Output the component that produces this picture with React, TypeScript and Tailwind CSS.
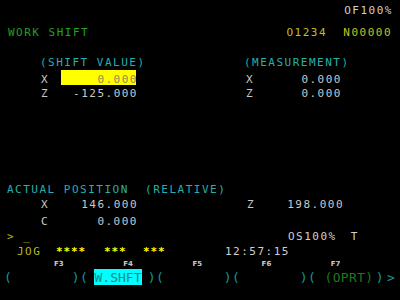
import React from "react";

function Btn({ children }: { children?: React.ReactNode }) {
  return (
    <div className="w-[76px] flex justify-between items-start">
      <span className="text-[#1a9494]">(</span>
      {children}
      <span className="text-[#1a9494]">)</span>
    </div>
  );
}

function Val({ w, children, cls = "" }: { w: string; children: React.ReactNode; cls?: string }) {
  return (
    <div className={`${w} flex justify-end ${cls}`}>
      <span className="-mr-[2px] whitespace-pre">{children}</span>
    </div>
  );
}

export default function App() {
  return (
    <div className="w-[400px] h-[300px] bg-black overflow-hidden font-['DejaVu_Sans_Mono',monospace] text-[11px] tracking-[1.5px] text-[#c8c8c8] flex flex-col">
      {/* status */}
      <div className="mt-[4px] h-[14px] leading-[14px] flex items-center justify-end pr-[7px]">
        <span className="text-[#d0d0d0]">OF100%</span>
      </div>
      {/* title */}
      <div className="mt-[8px] h-[14px] leading-[14px] flex items-center justify-between pl-[8px] pr-[8px]">
        <span className="text-[#22a022]">WORK SHIFT</span>
        <span className="text-[#c0c020] whitespace-pre">O1234  N00000</span>
      </div>
      {/* headings */}
      <div className="mt-[16px] h-[14px] leading-[14px] flex items-center pl-[40px] text-[#22b0b0]">
        <span className="w-[204px]">(SHIFT VALUE)</span>
        <span>(MEASUREMENT)</span>
      </div>
      {/* X row */}
      <div className="h-[15px] leading-[10px] flex items-end pl-[41px]">
        <span className="w-[20px]">X</span>
        <div className="w-[75px] h-[15px] bg-[#ffff00] flex items-end justify-end text-[#8c8c50]">
          <span className="-mr-[2px]">0.000</span>
        </div>
        <div className="w-[110px]" />
        <span className="w-[54px]">X</span>
        <Val w="w-[40px]">0.000</Val>
      </div>
      {/* Z row */}
      <div className="mt-[2px] h-[14px] leading-[14px] flex items-center pl-[41px]">
        <span className="w-[20px]">Z</span>
        <Val w="w-[75px]">-125.000</Val>
        <div className="w-[110px]" />
        <span className="w-[54px]">Z</span>
        <Val w="w-[40px]">0.000</Val>
      </div>
      {/* actual position */}
      <div className="mt-[81px] h-[15px] leading-[15px] flex items-center pl-[7px] text-[#22b0b0]">
        <span className="whitespace-pre">ACTUAL POSITION  (RELATIVE)</span>
      </div>
      <div className="mt-[1px] h-[14px] leading-[14px] flex items-center pl-[41px]">
        <span className="w-[20px]">X</span>
        <Val w="w-[75px]">146.000</Val>
        <div className="w-[111px]" />
        <span className="w-[54px]">Z</span>
        <Val w="w-[41px]">198.000</Val>
      </div>
      <div className="mt-[2px] h-[15px] leading-[15px] flex items-center pl-[41px]">
        <span className="w-[20px]">C</span>
        <Val w="w-[75px]">0.000</Val>
      </div>
      {/* input line */}
      <div className="h-[15px] leading-[15px] flex items-center pl-[7px]">
        <span className="w-[281px] text-[#b8b820] whitespace-pre">{"> _"}</span>
        <span className="text-[#d0d0d0]">OS100%</span>
        <span className="ml-[14px] text-[#d0d0d0]">T</span>
      </div>
      {/* JOG line */}
      <div className="mt-[1px] h-[14px] leading-[14px] flex items-center pl-[17px]">
        <span className="w-[39px] text-[#b8b820]">JOG</span>
        <span className="w-[48px] text-[#ffff00] font-bold tracking-[0.9px]">****</span>
        <span className="w-[39px] text-[#ffff00] font-bold tracking-[0.9px]">***</span>
        <span className="w-[82px] text-[#ffff00] font-bold tracking-[0.9px]">***</span>
        <span className="text-[#d0d0d0]">12:57:15</span>
      </div>
      {/* F labels */}
      <div className="mt-[2px] h-[6px] leading-[6px] flex items-center pl-[54px] font-['DejaVu_Sans',sans-serif] font-bold text-[7px] tracking-normal text-[#c8c8c8]">
        <span className="w-[77px]">F3</span>
        <span className="w-[77px]">F4</span>
        <span className="w-[77px]">F5</span>
        <span className="w-[77px]">F6</span>
        <span className="w-[77px]">F7</span>
      </div>
      {/* soft keys */}
      <div className="mt-[2px] h-[16px] leading-[16px] flex items-start pl-[4px] text-[13px] tracking-[0.3px] [&_span]:pt-[1px]">
        <Btn />
        <Btn>
          <div className="w-[48px] h-[16px] bg-[#00ffff] flex justify-center text-[#108a8a] tracking-[0px]">
            <span>W.SHFT</span>
          </div>
        </Btn>
        <Btn />
        <Btn />
        <Btn>
          <span className="ml-[6px] text-[#1a7a1a]">(OPRT)</span>
        </Btn>
        <span className="ml-[3px] text-[#1a9494]">&gt;</span>
      </div>
    </div>
  );
}
